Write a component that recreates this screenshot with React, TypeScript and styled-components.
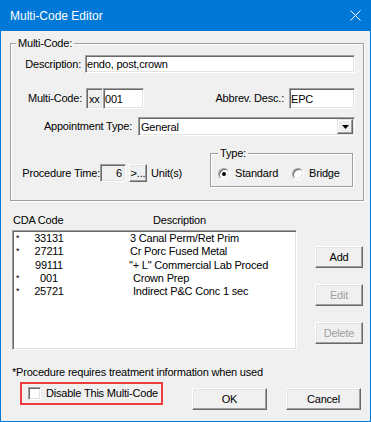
import styled, { createGlobalStyle } from "styled-components";

const GlobalStyle = createGlobalStyle`
  html, body {
    margin: 0;
    padding: 0;
    background: #ffffff;
  }
  body {
    font-family: "Liberation Sans", Arial, sans-serif;
    font-size: 11px;
    color: #000;
  }
  * {
    box-sizing: border-box;
  }
`;

const Window = styled.div`
  width: 371px;
  height: 422px;
  background: #f0f0f0;
  border: 1px solid #0078d7;
  border-top: 0;
  display: flex;
  flex-direction: column;
  letter-spacing: -0.2px;
`;

const TitleBar = styled.div`
  height: 31px;
  flex-shrink: 0;
  background: #0078d7;
  color: #fff;
  display: flex;
  align-items: center;
  justify-content: space-between;
  padding: 0 9px;
  font-size: 12px;
  letter-spacing: 0;
`;

const Body = styled.div`
  flex: 1;
  padding: 12px 0 0 9px;
  display: flex;
  flex-direction: column;
`;

const GroupBox = styled.div<{ $w: number; $h: number }>`
  position: relative;
  width: ${(p) => p.$w}px;
  height: ${(p) => p.$h}px;
  flex-shrink: 0;
  border: 1px solid #a0a0a0;
  box-shadow: 1px 1px 0 #fff, inset 1px 1px 0 #fff;
`;

const Legend = styled.span<{ $left: number }>`
  position: absolute;
  top: -7px;
  left: ${(p) => p.$left}px;
  padding: 0 2px;
  line-height: 13px;
  background: #f0f0f0;
`;

const GroupContent = styled.div`
  padding: 11px 8px 0 0;
  display: flex;
  flex-direction: column;
`;

const Row = styled.div<{ $mt: number; $align?: string }>`
  display: flex;
  align-items: ${(p) => p.$align ?? "center"};
  margin-top: ${(p) => p.$mt}px;
`;

const Label = styled.label<{ $w?: number; $gap: number }>`
  ${(p) => (p.$w ? `width: ${p.$w}px;` : "flex: 1;")}
  flex-shrink: 0;
  text-align: right;
  white-space: nowrap;
  margin-right: ${(p) => p.$gap}px;
  line-height: 13px;
`;

const Field = styled.div<{
  $w?: number;
  $h: number;
  $grey?: boolean;
  $pad?: number;
  $right?: boolean;
}>`
  ${(p) => (p.$w ? `width: ${p.$w}px;` : "flex: 1;")}
  height: ${(p) => p.$h}px;
  flex-shrink: 0;
  display: flex;
  align-items: center;
  justify-content: ${(p) => (p.$right ? "flex-end" : "flex-start")};
  padding: 0 ${(p) => p.$pad ?? 1}px;
  background: ${(p) => (p.$grey ? "#f0f0f0" : "#fff")};
  border: 1px solid;
  border-color: #a0a0a0 #fff #fff #a0a0a0;
  box-shadow: inset 1px 1px 0 #696969, inset -1px -1px 0 #e3e3e3;
  white-space: nowrap;
  position: relative;
`;

const DropButton = styled.div`
  position: absolute;
  right: 1px;
  top: 1px;
  width: 16px;
  height: 15px;
  background: #f0f0f0;
  border: 1px solid;
  border-color: #e3e3e3 #696969 #696969 #e3e3e3;
  box-shadow: inset -1px -1px 0 #a0a0a0, inset 1px 1px 0 #fff;
  display: flex;
  align-items: center;
  justify-content: center;
`;

const Raised = styled.button<{ $w: number; $h: number; $ml?: number; $mt?: number }>`
  width: ${(p) => p.$w}px;
  height: ${(p) => p.$h}px;
  margin: ${(p) => p.$mt ?? 0}px 0 0 ${(p) => p.$ml ?? 0}px;
  flex-shrink: 0;
  padding: 0;
  font: inherit;
  letter-spacing: inherit;
  color: #000;
  background: #f0f0f0;
  border: 1px solid;
  border-color: #fff #696969 #696969 #fff;
  box-shadow: inset -1px -1px 0 #a0a0a0, inset 1px 1px 0 #e3e3e3;
  &:disabled {
    color: #a0a0a0;
  }
`;

const Text = styled.span<{ $ml?: number }>`
  margin-left: ${(p) => p.$ml ?? 0}px;
  white-space: nowrap;
  line-height: 13px;
`;

const ProcedurePart = styled.div`
  display: flex;
  align-items: center;
  margin-top: 11px;
`;

const RadioRow = styled.div`
  display: flex;
  align-items: center;
  padding: 13px 0 0 7px;
`;

const Radio = styled.span<{ $on?: boolean; $ml?: number }>`
  width: 12px;
  height: 12px;
  margin-left: ${(p) => p.$ml ?? 0}px;
  border-radius: 50%;
  background: #fff;
  border: 1px solid;
  border-color: #a0a0a0 #fff #fff #a0a0a0;
  box-shadow: inset 1px 1px 0 #696969, inset -1px -1px 0 #e3e3e3;
  display: flex;
  align-items: center;
  justify-content: center;
  flex-shrink: 0;
  &::after {
    content: "";
    width: 4px;
    height: 4px;
    border-radius: 50%;
    background: ${(p) => (p.$on ? "#000" : "transparent")};
  }
`;

const ListHeader = styled.div`
  display: flex;
  margin-top: 13px;
  padding-left: 3px;
  line-height: 13px;
`;

const HeaderCell = styled.span<{ $w?: number }>`
  ${(p) => (p.$w ? `width: ${p.$w}px;` : "")}
`;

const ListArea = styled.div`
  display: flex;
  align-items: flex-start;
  margin-top: 3px;
`;

const ListBox = styled.div`
  width: 285px;
  height: 120px;
  margin-left: 2px;
  padding: 1px 0 0 3px;
  background: #fff;
  border: 1px solid;
  border-color: #a0a0a0 #fff #fff #a0a0a0;
  box-shadow: inset 1px 1px 0 #696969, inset -1px -1px 0 #e3e3e3;
`;

const ListRow = styled.div`
  display: flex;
  height: 13.3px;
  line-height: 13.3px;
  white-space: nowrap;
`;

const Star = styled.span`
  width: 13px;
  font-size: 9px;
  line-height: 9px;
  padding-top: 2px;
`;

const Code = styled.span`
  width: 40px;
  text-align: center;
`;

const Desc = styled.span<{ $indent: number }>`
  margin-left: ${(p) => 61 + p.$indent}px;
`;

const ButtonColumn = styled.div`
  display: flex;
  flex-direction: column;
  margin-left: 18px;
  padding-top: 16px;
  gap: 16px;
`;

const Footnote = styled.div`
  margin-top: 16px;
  padding-left: 2px;
  line-height: 13px;
`;

const BottomRow = styled.div`
  display: flex;
  align-items: flex-start;
  margin-top: 3px;
`;

const Highlight = styled.div`
  width: 143px;
  height: 23px;
  margin-left: 10px;
  border: 2px solid #ee3d3d;
  display: flex;
  align-items: center;
  padding-left: 6px;
`;

const CheckBox = styled.span`
  width: 13px;
  height: 13px;
  margin-right: 5px;
  background: #fff;
  border: 1px solid;
  border-color: #a0a0a0 #fff #fff #a0a0a0;
  box-shadow: inset 1px 1px 0 #696969, inset -1px -1px 0 #e3e3e3;
  flex-shrink: 0;
`;

const rows = [
  { star: true, code: "33131", desc: "3 Canal Perm/Ret Prim", indent: 0 },
  { star: true, code: "27211", desc: "Cr Porc Fused Metal", indent: 0 },
  { star: false, code: "99111", desc: '"+ L" Commercial Lab Proced', indent: -1 },
  { star: true, code: "001", desc: "Crown Prep", indent: 3 },
  { star: true, code: "25721", desc: "Indirect P&C Conc 1 sec", indent: 3 },
];

export default function App() {
  return (
    <>
      <GlobalStyle />
      <Window>
        <TitleBar>
          <span>Multi-Code Editor</span>
          <svg width="11" height="11" viewBox="0 0 11 11">
            <path d="M0.5 0.5 L10.5 10.5 M10.5 0.5 L0.5 10.5" stroke="#fff" strokeWidth="1" />
          </svg>
        </TitleBar>
        <Body>
          <GroupBox $w={354} $h={158}>
            <Legend $left={5}>Multi-Code:</Legend>
            <GroupContent>
              <Row $mt={0}>
                <Label $w={70} $gap={4}>Description:</Label>
                <Field $h={18}>endo, post,crown</Field>
              </Row>
              <Row $mt={15}>
                <Label $w={71} $gap={4}>Multi-Code:</Label>
                <Field $w={17} $h={21} $grey $pad={2}>xx</Field>
                <Field $w={41} $h={21} $pad={1}>001</Field>
                <Label $gap={5}>Abbrev. Desc.:</Label>
                <Field $w={66} $h={21} $pad={1}>EPC</Field>
              </Row>
              <Row $mt={8}>
                <Label $w={121} $gap={6}>Appointment Type:</Label>
                <Field $h={19} $pad={2}>
                  General
                  <DropButton>
                    <svg width="7" height="4" viewBox="0 0 7 4">
                      <path d="M0 0 H7 L3.5 4 Z" fill="#000" />
                    </svg>
                  </DropButton>
                </Field>
              </Row>
              <Row $mt={17} $align="flex-start">
                <ProcedurePart>
                  <Label $w={89} $gap={0}>Procedure Time:</Label>
                  <Field $w={26} $h={18} $grey $right $pad={3}>6</Field>
                  <Raised $w={18} $h={18} $ml={3}>&gt;...</Raised>
                  <Text $ml={4}>Unit(s)</Text>
                </ProcedurePart>
                <GroupBox $w={143} $h={34} style={{ marginLeft: "auto", marginRight: 2 }}>
                  <Legend $left={7}>Type:</Legend>
                  <RadioRow>
                    <Radio $on />
                    <Text $ml={5}>Standard</Text>
                    <Radio $ml={14} />
                    <Text $ml={5}>Bridge</Text>
                  </RadioRow>
                </GroupBox>
              </Row>
            </GroupContent>
          </GroupBox>

          <ListHeader>
            <HeaderCell $w={140}>CDA Code</HeaderCell>
            <HeaderCell>Description</HeaderCell>
          </ListHeader>
          <ListArea>
            <ListBox>
              {rows.map((r) => (
                <ListRow key={r.code}>
                  <Star>{r.star ? "*" : ""}</Star>
                  <Code>{r.code}</Code>
                  <Desc $indent={r.indent}>{r.desc}</Desc>
                </ListRow>
              ))}
            </ListBox>
            <ButtonColumn>
              <Raised $w={48} $h={22}>Add</Raised>
              <Raised $w={48} $h={22} disabled>Edit</Raised>
              <Raised $w={48} $h={22} disabled>Delete</Raised>
            </ButtonColumn>
          </ListArea>

          <Footnote>*Procedure requires treatment information when used</Footnote>
          <BottomRow>
            <Highlight>
              <CheckBox />
              <Text>Disable This Multi-Code</Text>
            </Highlight>
            <Raised $w={75} $h={22} $ml={29} $mt={6}>OK</Raised>
            <Raised $w={75} $h={22} $ml={19} $mt={6}>Cancel</Raised>
          </BottomRow>
        </Body>
      </Window>
    </>
  );
}
